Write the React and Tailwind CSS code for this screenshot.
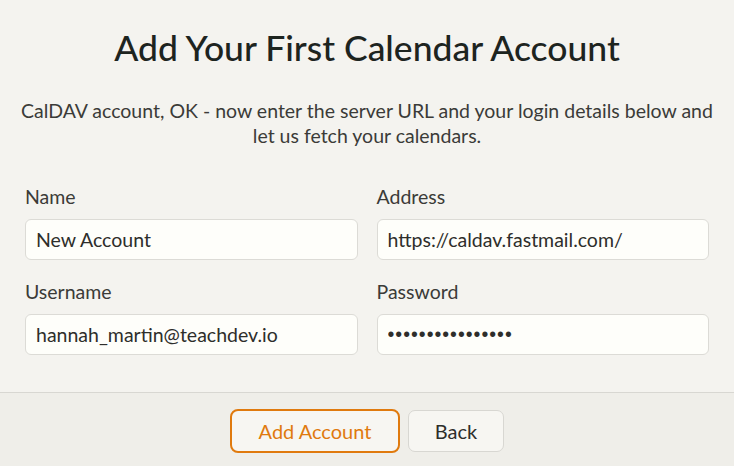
import React from 'react';

const font = { fontFamily: 'Lato, "Noto Sans", sans-serif' };

function Field({ label, value, secret }) {
  return (
    <div className="flex flex-col">
      <label className="text-[19.5px] leading-[24px] text-[#3b3b38] mb-[10px]">{label}</label>
      {secret ? (
        <input
          type="text"
          readOnly
          value={value}
          className="h-[41px] w-full rounded-[6px] border border-[#dcdbd6] bg-[#fefefa] px-[10px] font-['Liberation_Sans',sans-serif] text-[19.5px] tracking-[1px] text-[#2e2e2b] outline-none"
        />
      ) : (
        <input
          type="text"
          defaultValue={value}
          className="h-[41px] w-full rounded-[6px] border border-[#dcdbd6] bg-[#fefefa] px-[10px] text-[19.5px] text-[#2e2e2b] outline-none"
        />
      )}
    </div>
  );
}

export default function App() {
  return (
    <div className="flex h-[466px] w-[734px] flex-col bg-[#f4f3ef]" style={font}>
      <div className="flex-1 px-[10px] pt-[26px]">
        <h1 className="text-center text-[35.5px] leading-[44px] font-medium text-[#1d241f]">
          Add Your First Calendar Account
        </h1>
        <p className="mt-[28px] text-center text-[19.5px] leading-[25px] text-[#3b3b38] whitespace-nowrap">
          CalDAV account, OK - now enter the server URL and your login details below and
          <br />
          let us fetch your calendars.
        </p>
        <div className="mt-[37px] grid grid-cols-2 gap-x-[19px] gap-y-[20px] px-[15px]">
          <Field label="Name" value="New Account" />
          <Field label="Address" value="https://caldav.fastmail.com/" />
          <Field label="Username" value="hannah_martin@teachdev.io" />
          <Field label="Password" value="••••••••••••••••" secret />
        </div>
      </div>
      <div className="flex h-[74px] items-center justify-center gap-[8px] border-t border-[#d8d7d2] bg-[#efeee9]">
        <button className="mt-[2px] h-[44px] w-[170px] rounded-[8px] border-2 border-[#e07a0e] bg-[#f7f6f2] text-[20px] text-[#e07a0e]">
          Add Account
        </button>
        <button className="mt-[2px] h-[42px] w-[96px] rounded-[7px] border border-[#d8d7d2] bg-[#f7f6f2] text-[20px] text-[#2e2e2b]">
          Back
        </button>
      </div>
    </div>
  );
}
